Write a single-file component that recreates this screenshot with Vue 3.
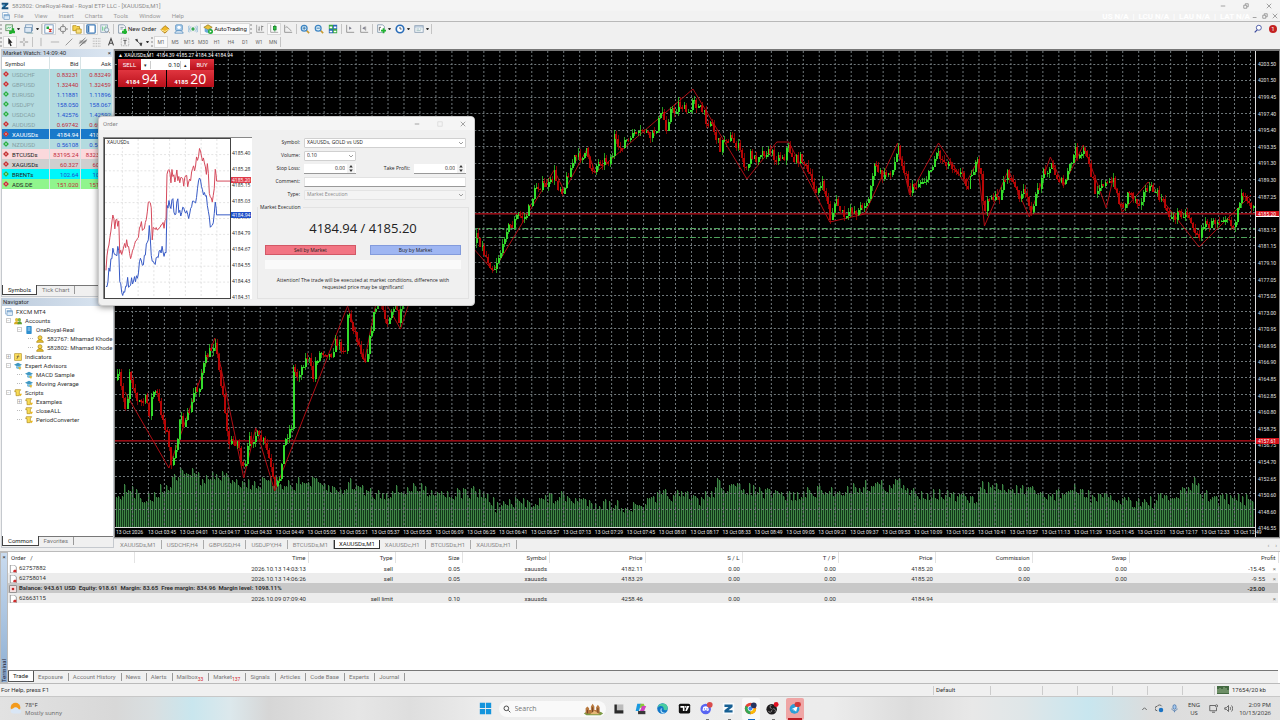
<script setup>
const icons = {
  logo: '<path d="M1 1h10v2.500L6 8h5v3H1V8.500L6 4H1z" fill="#17527f"/><path d="M2 5h4L3 8z" fill="#2b94cf"/>',
  doc: '<rect x="1" y="1" width="8" height="8" fill="#fff" stroke="#7ea6cc"/><rect x="3" y="4" width="8" height="7" fill="#dcebf8" stroke="#6d9ac4"/><path d="M3 5.500h8" stroke="#4f86bd"/>',
  newchart: '<rect x="1" y="1" width="8" height="7" fill="#e7f3e8" stroke="#5b8f5d"/><path d="M2 6l2-2 2 1 2-2" stroke="#4b7" fill="none"/><path d="M5 8h3V5h3v3h1v3h-4v1H5z" fill="#1fae2c"/>',
  profiles: '<rect x="2" y="1" width="8" height="7" fill="#f4f8fc" stroke="#6f93b5"/><rect x="1" y="4" width="8" height="6" fill="#dce8f4" stroke="#6f93b5"/><path d="M3 11h8" stroke="#8aa" />',
  market: '<rect x="1" y="1" width="10" height="10" fill="#fff" stroke="#6a8fb8"/><path d="M3 3h3v3H3z" fill="#22a63b"/><path d="M6 6l3 3M6 9l3-3" stroke="#d2342c" stroke-width="1.500"/>',
  cross: '<circle cx="6" cy="6" r="3.500" fill="none" stroke="#777"/><path d="M6 0v4M6 8v4M0 6h4M8 6h4" stroke="#777"/>',
  folder: '<path d="M1 2h4l1 1h3v5H1z" fill="#f6d351" stroke="#b99520"/><path d="M5 6h6v5H5z" fill="#f9e182" stroke="#b99520"/>',
  terminal: '<rect x="1" y="1" width="10" height="10" rx="1" fill="#fff" stroke="#3d78b5" stroke-width="1.500"/><path d="M2 2h2v8H2z" fill="#3d78b5"/>',
  tester: '<rect x="1" y="1" width="8" height="9" fill="#edf1f5" stroke="#91a5ba"/><path d="M3 3v5M5 4v4M7 2v4" stroke="#6c8"/><circle cx="8" cy="7" r="2.500" fill="#dff0fa" stroke="#8795a5"/><path d="M10 9l2 2" stroke="#987"/>',
  order: '<path d="M2 1h6l2 2v8H2z" fill="#fff" stroke="#71889f"/><path d="M4 4h4M4 6h3" stroke="#789"/><path d="M6 8h2V6h3v2h1v3h-1v1H8v-1H6z" fill="#21b331"/>',
  diamond: '<path d="M1 7l5-5 5 4-5 5z" fill="#f0b92a" stroke="#a8770d"/><path d="M1 7l5 2 5-3" stroke="#fff0b0" fill="none"/>',
  person: '<rect x="2" y="1" width="8" height="7" rx="1" fill="#a9cdec" stroke="#5b91c1"/><circle cx="6" cy="4" r="2" fill="#fff"/><path d="M1 11c0-4 10-4 10 0z" fill="#e4eef7" stroke="#5b91c1"/>',
  signal: '<circle cx="6" cy="6" r="2" fill="#36a852"/><path d="M3.500 3c-2 2-2 4 0 6M8.500 3c2 2 2 4 0 6M1.500 2c-2 3-2 5 0 8M10.500 2c2 3 2 5 0 8" stroke="#7baed2" fill="none"/>',
  auto: '<path d="M1 4l5-3 5 3-5 3z" fill="#e8c23d" stroke="#9d8323"/><path d="M2 5v4c2 2 6 2 8 0V5L6 7z" fill="#6aaad8"/><circle cx="9" cy="9" r="3" fill="#20ad36"/><path d="M8 7.500L10.500 9 8 10.500z" fill="#fff"/>',
  bars: '<path d="M2 1v9h9" stroke="#999" fill="none"/><path d="M5 3v5M4 7h1M8 2v6M8 3h2" stroke="#777"/>',
  candles: '<path d="M2 1v9h9" stroke="#999" fill="none"/><path d="M7 1v8" stroke="#18852a"/><rect x="5.500" y="3" width="3" height="4" fill="#2fc645" stroke="#18852a"/>',
  line: '<path d="M2 1v9h9M3 4c3-2 4 3 7 4" stroke="#888" fill="none"/>',
  zoomin: '<path d="M7.500 7.500L11 11" stroke="#c89a31" stroke-width="2"/><circle cx="5" cy="5" r="3.500" fill="#d9effb" stroke="#3d84c2" stroke-width="1.500"/><path d="M3 5h4M5 3v4" stroke="#2c6aa0"/>',
  zoomout: '<path d="M7.500 7.500L11 11" stroke="#c89a31" stroke-width="2"/><circle cx="5" cy="5" r="3.500" fill="#d9effb" stroke="#3d84c2" stroke-width="1.500"/><path d="M3 5h4" stroke="#2c6aa0"/>',
  tile: '<path d="M1 1h5v5H1zM6 6h5v5H6z" fill="#39a845"/><path d="M6 1h5v5H6zM1 6h5v5H1z" fill="#2b68b8"/><path d="M2 3h3v2H2zM7 3h3v2H7zM2 8h3v2H2zM7 8h3v2H7z" fill="#fff"/>',
  shift: '<path d="M2 1v9h9" stroke="#888" fill="none"/><path d="M5 3l3 2-3 2z" fill="#778"/>',
  scroll: '<path d="M2 1v9h9M8 3v5" stroke="#888" fill="none"/><path d="M7 3L4 5l3 2z" fill="#778"/>',
  indic: '<path d="M2 1h6l2 2v7H2z" fill="#fff" stroke="#7d94a8"/><path d="M4 8V4h2" stroke="#555" fill="none"/><path d="M6 7h2V5h2v2h2v2h-2v2H8V9H6z" fill="#21b331"/>',
  clock: '<circle cx="6" cy="6" r="4.500" fill="#fff" stroke="#2a6db8" stroke-width="2"/><path d="M6 3.500V6h2" stroke="#345" fill="none"/>',
  template: '<rect x="1" y="2" width="10" height="8" fill="#f4f7fa" stroke="#8a9fb4"/><path d="M1 3.500h10" stroke="#8aa6c2"/><path d="M3 6h3M3 8h5M7 6h2" stroke="#9bb"/>',
  cursor: '<path d="M4 1l5 6H6.500L8 10.500l-1.500.500L5 7.500 4 9z" fill="#222"/>',
  plus: '<path d="M6 1v4M6 7v4M1 6h4M7 6h4" stroke="#888"/>',
  vline: '<path d="M6 1v10" stroke="#aaa"/>',
  hline: '<path d="M1 6h10" stroke="#aaa"/>',
  trend: '<path d="M2 10L10 2" stroke="#888"/>',
  channel: '<path d="M1 8l8-7M3 10l8-7M2 11l8-7M2 5h8M2 7h7" stroke="#777"/>',
  fibo: '<path d="M1 2h10M1 5h10M1 8h10M1 11h10" stroke="#999" stroke-dasharray="1 1"/>',
  letter: '<path d="M3 10L6 2l3 8M4 7.500h4" stroke="#444" stroke-width="1.300" fill="none"/>',
  label: '<rect x="1.500" y="1.500" width="9" height="9" fill="none" stroke="#999" stroke-dasharray="1 1"/><path d="M4 4h4M6 4v5" stroke="#444"/>',
  arrows: '<path d="M1 3l3-1 1 3-1 1zM7 7l3 0-1 4-2-1z" fill="#444"/><path d="M3 4l5 5" stroke="#444"/>',
  accounts: '<circle cx="4" cy="4" r="2.500" fill="#e2bb33"/><path d="M0 11c0-6 8-6 8 0z" fill="#d5a91f"/><circle cx="8" cy="4" r="2.500" fill="#7cb342"/><path d="M5 11c0-6 7-6 7 0z" fill="#5f9c30"/>',
  server: '<rect x="2" y="0" width="8" height="12" rx="1" fill="#2f8fcf"/><path d="M4 3h4M4 6h4" stroke="#fff"/>',
  user: '<circle cx="6" cy="4" r="3" fill="#f3d043" stroke="#a07d12"/><path d="M1 11c0-5 10-5 10 0z" fill="#eac22f" stroke="#a07d12"/>',
  func: '<rect x="1" y="1" width="10" height="10" fill="#f9dc5a" stroke="#b8962b"/><path d="M7 3c-2 0-1 5-3 6M4 5.500h4" stroke="#654" fill="none"/>',
  expert: '<path d="M0 4l6-3 6 3-6 3z" fill="#3f97c2"/><path d="M3 6v3c2 2 5 2 7 0V5L6 7z" fill="#78bddf"/><path d="M6 8l5 0-2 4z" fill="#e6b92c"/>',
  script: '<path d="M2 1h8L8 4v6H3V4H1z" fill="#f8dc58" stroke="#ac8a20"/><path d="M7 7h5l-2 4z" fill="#e9b71d"/>',
  sheet: '<path d="M2 0h6l3 3v9H2z" fill="#fff" stroke="#777"/><path d="M6 9l2-2h3v4H7z" fill="#cf2c2c"/>',
  balance: '<rect x="1" y="1" width="10" height="10" fill="#f2dede" stroke="#777"/><circle cx="6" cy="6" r="2" fill="#c22727"/>',
}
const menus = ['File', 'View', 'Insert', 'Charts', 'Tools', 'Window', 'Help']
const tools = [
  { i: 'newchart', c: 1, t: 'New chart' }, { i: 'profiles', c: 1, t: 'Profiles' }, { s: 1 },
  { i: 'market', p: 1, t: 'Market Watch' }, { i: 'cross', t: 'Data Window' }, { i: 'folder', p: 1, t: 'Navigator' }, { i: 'terminal', p: 1, t: 'Terminal' }, { i: 'tester', t: 'Strategy Tester' }, { s: 3 },
  { i: 'order', text: 'New Order' }, { i: 'diamond', t: 'MetaEditor' }, { i: 'person', t: 'Virtual hosting' }, { i: 'signal', t: 'Signals' },
  { i: 'auto', text: 'AutoTrading', p: 1 }, { g: 1 }, { i: 'bars', t: 'Bar chart' }, { i: 'candles', p: 1, t: 'Candlesticks' }, { i: 'line', t: 'Line chart' }, { s: 3 },
  { i: 'zoomin', t: 'Zoom in' }, { i: 'zoomout', t: 'Zoom out' }, { i: 'tile', t: 'Tile windows' }, { s: 3 }, { i: 'shift', t: 'Auto scroll' }, { i: 'scroll', t: 'Chart shift' }, { s: 3 },
  { i: 'indic', c: 1, t: 'Indicators' }, { i: 'clock', c: 1, t: 'Periods' }, { i: 'template', c: 1, t: 'Templates' }, { s: 1 },
]
const drawTools = ['cursor', 'plus', '', 'vline', 'hline', 'trend', 'channel', 'fibo', 'letter', 'label']
const periods = ['M1', 'M5', 'M15', 'M30', 'H1', 'H4', 'D1', 'W1', 'MN']
const quotes = [
  ['USDCHF', '0.83231', '0.83249', 0, 'fx'], ['GBPUSD', '1.32440', '1.32459', 0, 'fx'], ['EURUSD', '1.11881', '1.11896', 1, 'fx'],
  ['USDJPY', '158.050', '158.067', 1, 'fx'], ['USDCAD', '1.42576', '1.42592', 1, 'fx'], ['AUDUSD', '0.69742', '0.69758', 0, 'fx'],
  ['XAUUSDs', '4184.94', '4185.20', 0, 'sel'], ['NZDUSD', '0.56108', '0.56127', 1, 'fx'], ['BTCUSDs', '83195.24', '83231.24', 0, 'btc'],
  ['XAGUSDs', '60.327', '60.352', 0, 'xag'], ['BRENTs', '102.64', '102.70', 1, 'brent'], ['ADS.DE', '151.020', '151.120', 0, 'ads'],
].map(([name, bid, ask, up, kind]) => ({ name, bid, ask, up, kind }))
const tree = [
  [0, 'doc', 'FXCM MT4', ''], [1, 'accounts', 'Accounts', '−'], [2, 'server', 'OneRoyal-Real', '−'], [3, 'user', '582767: Mhamad Khode', ''], [3, 'user', '582802: Mhamad Khode', ''],
  [1, 'func', 'Indicators', '+'], [1, 'expert', 'Expert Advisors', '−'], [2, 'expert', 'MACD Sample', ''], [2, 'expert', 'Moving Average', ''],
  [1, 'script', 'Scripts', '−'], [2, 'script', 'Examples', '+'], [2, 'script', 'closeALL', ''], [2, 'script', 'PeriodConverter', ''],
]
const chartTabs = ['XAUUSDs,M1', 'USDCHF,H4', 'GBPUSD,H4', 'USDJPY,H4', 'BTCUSDs,M1', 'XAUUSDs,M1', 'XAUUSDc,H1', 'BTCUSDs,H1', 'XAUUSDs,H1']
const prices = ['4203.50', '4201.50', '4199.45', '4197.40', '4195.40', '4193.35', '4191.30', '4189.30', '4187.25', '4185.20', '4183.15', '4181.15', '4179.10', '4177.05', '4175.05', '4173.00', '4170.95', '4168.95', '4166.90', '4164.85', '4162.85', '4160.80', '4158.75', '4156.75', '4154.70', '4152.65', '4150.60', '4148.60', '4146.55']
const times = ['13 Oct 2026']
for (let k = 0; k < 35; k++) {
  const m = 225 + k * 16
  times.push('13 Oct ' + String(Math.floor(m / 60)).padStart(2, '0') + ':' + String(m % 60).padStart(2, '0'))
}
const orders = [
  ['62757882', '2026.10.13 14:03:13', 'sell', '0.05', 'xauusds', '4182.11', '0.00', '0.00', '4185.20', '0.00', '0.00', '-15.45'],
  ['62758014', '2026.10.13 14:06:26', 'sell', '0.05', 'xauusds', '4183.29', '0.00', '0.00', '4185.20', '0.00', '0.00', '-9.55'],
]
const pending = ['62663115', '2026.10.09 07:09:40', 'sell limit', '0.10', 'xauusds', '4258.46', '0.00', '0.00', '4184.94', '', '', '']
const heads = ['Time', 'Type', 'Size', 'Symbol', 'Price', 'S / L', 'T / P', 'Price', 'Commission', 'Swap']
const termTabs = [['Trade'], ['Exposure'], ['Account History'], ['News'], ['Alerts'], ['Mailbox', '33'], ['Market', '137'], ['Signals'], ['Articles'], ['Code Base'], ['Experts'], ['Journal']]
const tickLabels = ['4185.40', '4185.28', '4185.15', '4185.03', '4184.91', '4184.79', '4184.67', '4184.55', '4184.43', '4184.31']

let seed = 7
const rnd = () => { seed = (seed * 16807) % 2147483647; return seed / 2147483647 }
const at = (pts, x) => {
  for (let k = 1; k < pts.length; k++) {
    if (x <= pts[k][0]) {
      const [x0, y0] = pts[k - 1], [x1, y1] = pts[k]
      return x1 === x0 ? y1 : y0 + ((y1 - y0) * (x - x0)) / (x1 - x0)
    }
  }
  return pts[pts.length - 1][1]
}
const pairs = (s) => s.trim().split(/\s+/).map((p) => p.split(',').map(Number))
const course = pairs(`116,380 119,375 122,394 126,410 129,370 134,388 137,402 142,402 146,398 149,412 152,391 157,395 163,420 168,436 170,462 174,462 178,430 180,408 184,428 188,412 192,402 194,386 198,392 201,372 206,356 212,348 215,339 218,365 224,400 228,444 232,441 238,442 241,460 244,475 248,440 252,440 256,433 260,440 264,442 268,454 272,475 275,489 279,478 282,450 286,436 291,426 292,366 297,376 301,368 304,360 308,356 313,378 315,362 320,352 326,352 330,356 335,342 339,345 345,350 347,314 350,318 354,330 360,348 365,360 369,340 373,315 377,302 382,306 386,322 391,310 396,306 400,327 402,300 420,270 450,240 475,240 476,229 480,240 486,255 494,270 498,258 503,248 506,228 513,225 518,215 526,218 532,200 537,186 544,185 550,185 555,173 559,186 564,190 568,175 575,158 582,156 587,152 590,165 594,170 600,161 610,160 613,154 615,136 619,151 626,140 631,142 633,130 638,137 644,128 650,138 656,130 660,118 663,112 667,127 671,110 676,112 679,103 684,108 690,116 694,92 697,105 704,112 708,122 712,120 716,135 721,148 725,138 731,138 738,145 744,160 748,176 750,152 756,160 760,152 766,152 772,152 776,158 782,155 785,157 788,145 795,160 803,158 811,178 816,190 824,185 828,200 831,218 836,200 842,212 848,220 851,208 858,213 862,205 869,200 873,173 876,165 883,177 893,170 899,147 905,170 911,190 920,182 928,178 938,150 943,160 953,165 963,175 969,185 974,170 979,163 984,180 986,216 991,195 1000,200 1006,178 1010,173 1020,195 1026,192 1032,210 1040,190 1044,172 1053,166 1060,178 1065,185 1072,165 1077,150 1082,160 1086,147 1092,170 1097,190 1104,182 1110,185 1116,180 1122,207 1126,205 1130,190 1140,203 1148,188 1156,190 1165,203 1174,220 1180,212 1190,214 1197,232 1202,243 1203,224 1212,225 1225,216 1230,216 1236,229 1238,212 1242,195 1250,206 1255,204`)
const candles = []
let last = 380
for (let x = 117; x < 1256; x += 2) {
  const close = at(course, x) + (rnd() - 0.5) * 9
  const top = Math.min(last, close), bottom = Math.max(last, close)
  candles.push({ x, y: top, h: Math.max(1.5, bottom - top), up: close < last, wt: top - rnd() * 5, wb: bottom + rnd() * 5 })
  last = close
}
const zigzag = '125,392 169,468 215,338 244,478 256,428 275,491 348,306 365,361 379,290 401,329 440,210 494,271 555,170 565,191 588,149 596,173 694,89 748,179 778,142 790,142 831,222 866,214 899,143 911,195 940,143 967,184 979,161 986,226 1010,170 1031,217 1052,157 1065,186 1085,145 1108,208 1115,178 1124,212 1150,182 1201,247 1253,195'
const volEnv = pairs('116,492 125,488 150,496 163,486 172,480 178,470 192,470 204,480 212,474 232,476 245,482 275,480 290,482 312,480 340,490 348,481 375,492 420,486 450,492 480,490 490,497 496,504 530,500 560,495 590,500 640,506 665,492 700,497 714,490 720,477 726,487 748,486 765,492 800,494 815,489 835,490 875,482 895,485 898,476 905,490 940,492 975,499 985,484 1020,488 1050,494 1075,488 1100,496 1150,500 1180,494 1197,480 1206,494 1230,498 1256,495')
const volumes = []
for (let x = 116; x < 1256; x += 2) volumes.push({ x, y: Math.min(514, at(volEnv, x) + (rnd() - 0.35) * 13) })
const vgrid = Array.from({ length: 71 }, (_, k) => 132 + k * 16)
const hgrid = Array.from({ length: 28 }, (_, k) => 64 + k * 16.5)

const ask = pairs('20,465 30,390 42,312 46,350 50,314 55,345 60,316 62,430 75,410 85,390 95,435 105,395 118,380 127,315 133,370 140,320 148,290 152,270 158,300 160,375 170,342 180,350 190,322 198,355 203,320 206,180 212,175 218,212 222,172 230,205 235,180 243,212 250,180 257,210 262,178 270,215 280,200 285,165 290,180 295,142 300,150 307,97 312,140 318,130 325,175 330,165 335,240 345,266 350,220 353,167 357,208')
const bid = pairs('20,530 30,480 42,408 50,435 58,402 62,510 72,545 85,510 95,520 105,500 115,505 127,432 133,465 140,420 152,357 160,455 170,450 180,435 190,417 198,440 203,425 206,285 212,265 218,300 222,252 230,318 238,270 247,318 255,280 262,310 275,308 285,262 290,285 298,252 307,182 312,225 318,245 325,250 333,310 340,348 347,330 352,267 357,310')
const rough = (pts) => {
  let s = ''
  for (let x = 20; x <= 357; x += 3) s += `${x},${(at(pts, x) + (rnd() - 0.5) * 30).toFixed(1)} `
  return s
}
const askLine = rough(ask) + '357,208 398,208'
const bidLine = rough(bid) + '357,310 398,310'
</script>

<template>
  <div class="desktop">
    <header class="titlebar">
      <svg class="ico" viewBox="0 0 12 12" v-html="icons.logo"></svg>
      <h1>582802: OneRoyal-Real - Royal ETP LLC - [XAUUSDs,M1]</h1>
      <div class="winbtns">
        <button aria-label="Minimize"><svg viewBox="0 0 8 8"><path d="M1 4h6" /></svg></button>
        <button aria-label="Restore"><svg viewBox="0 0 8 8"><path d="M1 3h4v4H1zM3 3V1h4v4H5" /></svg></button>
        <button aria-label="Close"><svg viewBox="0 0 8 8"><path d="M1 1l6 6M7 1L1 7" /></svg></button>
      </div>
    </header>
    <nav class="menubar">
      <svg class="ico" viewBox="0 0 12 12" v-html="icons.doc"></svg>
      <button v-for="m in menus" :key="m">{{ m }}</button>
      <span class="ghost">US N/A&nbsp; |&nbsp; LCU N/A&nbsp; |&nbsp; LAU N/A&nbsp; |&nbsp; LAT N/A</span>
      <div class="docbtns">
        <button aria-label="Minimize chart"><svg viewBox="0 0 8 8"><path d="M1 6h5" /></svg></button>
        <button aria-label="Restore chart"><svg viewBox="0 0 8 8"><path d="M1 3h4v4H1zM3 3V1h4v4H5" /></svg></button>
        <button aria-label="Close chart"><svg viewBox="0 0 8 8"><path d="M1 1l6 6M7 1L1 7" /></svg></button>
      </div>
    </nav>
    <div class="toolbar main">
      <i class="grip"></i>
      <template v-for="(t, k) in tools" :key="k">
        <i v-if="t.s" class="sep" :class="{ wide: t.s > 1 }"></i>
        <i v-else-if="t.g" class="grip"></i>
        <button v-else class="tool" :class="{ pressed: t.p, drop: t.c, labelled: t.text }" :aria-label="t.text || t.t">
          <svg class="ico" viewBox="0 0 12 12" v-html="icons[t.i]"></svg><span v-if="t.text">{{ t.text }}</span><i v-if="t.c" class="caret"></i>
        </button>
      </template>
      <div class="right">
        <button class="tool" aria-label="Search"><svg class="ico" viewBox="0 0 12 12"><circle cx="7" cy="4.500" r="3" fill="#fff" stroke="#39489c" /><path d="M5 7L2 10" stroke="#39489c" stroke-width="1.500" /></svg></button>
        <button class="notice" aria-label="Notifications">1</button>
      </div>
    </div>
    <div class="toolbar second">
      <i class="grip"></i>
      <template v-for="(d, k) in drawTools" :key="k">
        <i v-if="!d" class="sep wide"></i>
        <button v-else class="tool" :class="{ pressed: d === 'cursor' }" :aria-label="d"><svg class="ico" viewBox="0 0 12 12" v-html="icons[d]"></svg></button>
      </template>
      <button class="tool drop" aria-label="Arrows"><svg class="ico" viewBox="0 0 12 12" v-html="icons.arrows"></svg><i class="caret"></i></button>
      <i class="grip"></i>
      <button v-for="p in periods" :key="p" class="tool period" :class="{ pressed: p === 'M1' }">{{ p }}</button>
      <i class="sep"></i>
    </div>

    <main class="work">
      <aside class="side">
        <section class="panel watch">
          <h2>Market Watch: 14:09:40 <button aria-label="Close Market Watch">×</button></h2>
          <table class="quotes">
            <thead><tr><th>Symbol</th><th>Bid</th><th>Ask</th></tr></thead>
            <tbody>
              <tr v-for="q in quotes" :key="q.name" :class="[q.kind, { up: q.up }]">
                <td><i class="mark"></i>{{ q.name }}</td><td>{{ q.bid }}</td><td>{{ q.ask }}</td>
              </tr>
            </tbody>
          </table>
          <div class="tabs"><button class="on">Symbols</button><button>Tick Chart</button></div>
        </section>
        <section class="panel">
          <h2>Navigator</h2>
          <ul class="tree">
            <li v-for="(n, k) in tree" :key="k" :class="'l' + n[0]">
              <i class="box">{{ n[3] }}</i><svg class="ico" viewBox="0 0 12 12" v-html="icons[n[1]]"></svg><span>{{ n[2] }}</span>
            </li>
          </ul>
          <div class="tabs"><button class="on">Common</button><button>Favorites</button></div>
        </section>
      </aside>

      <section class="chartarea">
        <div class="chart">
          <div class="plotcol">
            <svg class="plot" viewBox="115 51 1142 476" preserveAspectRatio="none" shape-rendering="crispEdges">
              <rect v-for="v in volumes" :key="v.x" :x="v.x" :y="v.y" width="1" :height="527 - v.y" fill="#3f8545" />
              <rect v-for="v in volumes" :key="'s' + v.x" :x="v.x + 1" :y="v.y + 1" width="1" :height="526 - v.y" fill="#12361a" />
              <g stroke="#6f777a" stroke-dasharray="2 2">
                <path v-for="x in vgrid" :key="x" :d="`M${x}.5 51V527`" />
                <path v-for="y in hgrid" :key="y" :d="`M115 ${Math.floor(y)}.5H1257`" />
              </g>
              <path d="M115 213.500H1257M115 440.500H1257" stroke="#980b14" />
              <path d="M115 214.500H1257M115 441.500H1257" stroke="#5d0b10" />
              <path d="M115 228.500H1257M115 237.500H1257" stroke="#4fa35c" stroke-dasharray="6 2 2 2" />
              <polyline :points="zigzag" fill="none" stroke="#b00d14" shape-rendering="auto" />
              <g v-for="c in candles" :key="c.x" :fill="c.up ? '#34dc2c' : '#b80606'">
                <rect :x="c.x" :y="c.wt" width="1" :height="c.wb - c.wt" opacity=".7" />
                <rect :x="c.x - (c.up ? 0 : 1)" :y="c.y" width="2" :height="c.h" />
              </g>
            </svg>
            <div class="times"><span v-for="t in times" :key="t">{{ t }}</span></div>
          </div>
          <div class="axis">
            <span v-for="p in prices" :key="p">{{ p }}</span>
            <b class="tag one">4185.20</b><b class="tag two">4157.61</b>
          </div>
          <div class="oneclick">
            <p>▲ XAUUSDs,M1&nbsp; 4184.39 4185.27 4184.34 4184.94</p>
            <div class="ocgrid">
              <button class="red">SELL</button>
              <span class="vol"><button aria-label="Decrease">▾</button><input aria-label="Volume" value="0.10"><button aria-label="Increase">▴</button></span>
              <button class="red">BUY</button>
            </div>
            <div class="ocprices"><span>4184 <b>94</b></span><span>4185 <b>20</b></span></div>
          </div>
        </div>
        <div class="charttabs">
          <button v-for="(t, k) in chartTabs" :key="k" :class="{ on: k === 5 }">{{ t }}</button>
          <span class="scroller"><button aria-label="Scroll left">‹</button><button aria-label="Scroll right">›</button></span>
        </div>
      </section>

      <section class="dialog" role="dialog" aria-label="Order">
        <div class="dtitle">
          <h2>Order</h2>
          <div class="winbtns">
            <button aria-label="Minimize order"><svg viewBox="0 0 8 8"><path d="M1 4h6" /></svg></button>
            <button class="dim" aria-label="Maximize order"><svg viewBox="0 0 8 8"><path d="M1 1h6v6H1z" /></svg></button>
            <button aria-label="Close order"><svg viewBox="0 0 8 8"><path d="M1 1l6 6M7 1L1 7" /></svg></button>
          </div>
        </div>
        <div class="dbody">
          <div class="ticks">
            <div class="tickplot">
              <span>XAUUSDs</span>
              <svg viewBox="17 81 381 480" preserveAspectRatio="none">
                <path d="M70 81V561M118 81V561M166 81V561M214 81V561M262 81V561M310 81V561M358 81V561M17 128H398M17 177H398M17 225H398M17 273H398M17 321H398M17 369H398M17 416H398M17 465H398M17 513H398" stroke="#d6d6d6" stroke-width="2" stroke-dasharray="6 6" />
                <polyline :points="bidLine" fill="none" stroke="#3558c4" stroke-width="3" />
                <polyline :points="askLine" fill="none" stroke="#d5485a" stroke-width="3" />
              </svg>
            </div>
            <div class="ticklabels">
              <span v-for="t in tickLabels" :key="t">{{ t }}</span>
              <b class="tred">4185.20</b><b class="tblue">4184.94</b>
            </div>
          </div>
          <form class="form" @submit.prevent>
            <div class="frow"><label for="sym">Symbol:</label><select id="sym" class="grow"><option>XAUUSDs, GOLD vs USD</option></select></div>
            <div class="frow"><label for="vol">Volume:</label><select id="vol" class="short"><option>0.10</option></select></div>
            <div class="frow">
              <label for="sl">Stop Loss:</label><span class="spin"><input id="sl" value="0.00"><svg viewBox="0 0 8 10"><path d="M2 4l2-3 2 3zM2 6l2 3 2-3z" fill="#333" /></svg></span>
              <label for="tp" class="far">Take Profit:</label><span class="spin"><input id="tp" value="0.00"><svg viewBox="0 0 8 10"><path d="M2 4l2-3 2 3zM2 6l2 3 2-3z" fill="#333" /></svg></span>
            </div>
            <div class="frow"><label for="com">Comment:</label><input id="com" class="grow"></div>
            <div class="frow"><label for="typ">Type:</label><select id="typ" class="grow off" disabled><option>Market Execution</option></select></div>
            <fieldset>
              <legend>Market Execution</legend>
              <output>4184.94 / 4185.20</output>
              <div class="deal"><button class="sell">Sell by Market</button><button class="buy">Buy by Market</button></div>
              <div class="blank"></div>
              <p>Attention! The trade will be executed at market conditions, difference with requested price may be significant!</p>
            </fieldset>
          </form>
        </div>
      </section>
    </main>

    <section class="terminal">
      <div class="strip"><button aria-label="Close Terminal">×</button><span>Terminal</span></div>
      <div class="termbody">
        <table class="orders">
          <colgroup><col class="c126"><col class="c175"><col class="c87"><col class="c67"><col class="c87"><col class="c96"><col class="c97"><col class="c96"><col class="c97"><col class="c97"><col class="c97"><col class="c138"><col class="c10"></colgroup>
          <thead><tr><th>Order&nbsp;&nbsp; /</th><th v-for="(h, k) in heads" :key="k">{{ h }}</th><th colspan="2">Profit</th></tr></thead>
          <tbody>
            <tr v-for="(o, r) in orders" :key="o[0]" :class="{ alt: r }">
              <td v-for="(c, k) in o" :key="k"><svg v-if="!k" class="ico" viewBox="0 0 12 12" v-html="icons.sheet"></svg>{{ c }}</td>
              <td><button :aria-label="'Close ' + o[0]">×</button></td>
            </tr>
            <tr class="balance">
              <td colspan="11"><svg class="ico" viewBox="0 0 12 12" v-html="icons.balance"></svg>Balance: 943.61 USD&nbsp; Equity: 918.61&nbsp; Margin: 83.65&nbsp; Free margin: 834.96&nbsp; Margin level: 1098.11%</td>
              <td>-25.00</td><td></td>
            </tr>
            <tr class="alt">
              <td v-for="(c, k) in pending" :key="k"><svg v-if="!k" class="ico" viewBox="0 0 12 12" v-html="icons.sheet"></svg>{{ c }}</td>
              <td><button aria-label="Delete 62663115">×</button></td>
            </tr>
          </tbody>
        </table>
        <div class="termtabs"><button v-for="(t, k) in termTabs" :key="t[0]" :class="{ on: !k }">{{ t[0] }}<sub v-if="t[1]">{{ t[1] }}</sub></button></div>
      </div>
    </section>
    <footer class="status">
      <span class="help">For Help, press F1</span><span class="prof">Default</span><span class="s1"></span><span class="s2"></span><span class="s2"></span><span class="s2"></span><span class="s2"></span><span class="s3"></span>
      <span class="net"><svg viewBox="0 0 12 8"><path d="M0 0h12v8H0z" fill="#446a42" /><path d="M1 7V3M3 7V2M5 7V3M7 7V1M9 7V2M11 7V4" stroke="#98b48b" /></svg>17654/20 kb</span>
    </footer>

    <div class="taskbar">
      <button class="weather">
        <svg viewBox="0 0 16 16"><circle cx="8" cy="7" r="6" fill="#f39a1c" /><path d="M5 14a3 3 0 010-6 4 4 0 017 1 2.500 2.500 0 011 5z" fill="#d9e6f5" /></svg>
        <span>78°F<small>Mostly sunny</small></span>
      </button>
      <div class="apps">
        <button aria-label="Start"><svg viewBox="0 0 16 16"><path d="M1 1h6.500v6.500H1zM8.500 1H15v6.500H8.500zM1 8.500h6.500V15H1zM8.500 8.500H15V15H8.500z" fill="#1494dc" /></svg></button>
        <label class="search">
          <svg viewBox="0 0 12 12"><circle cx="5" cy="5" r="3.500" fill="none" stroke="#333" stroke-width="1.300" /><path d="M8 8l3 3" stroke="#333" stroke-width="1.300" /></svg>
          <input aria-label="Search" placeholder="Search">
          <svg class="castle" viewBox="0 0 24 16"><path d="M1 13c4-4 18-4 22 0l-3 2H4z" fill="#7d9a45" /><path d="M3 13V7l2-2 2 2v2h2V5l2-3 2 3v4h2V6l2-3 2 3v7z" fill="#b8793f" /><path d="M5 13V9M11 13V6M17 13V7" stroke="#693c22" /><path d="M8 14l5-4 6 4z" fill="#e6b878" /></svg>
        </label>
        <button aria-label="Task view"><svg viewBox="0 0 16 16"><path d="M6 3h8v7H6z" fill="#bbb" /><path d="M3 3h3v7h8v4H3z" fill="#292929" /></svg></button>
        <button aria-label="Copilot"><svg viewBox="0 0 16 16"><path d="M4 2h5L6 11H2z" fill="#1b9ae0" /><path d="M8 2h4l2 5H7z" fill="#8cc63e" /><path d="M10 5h5l-3 7H7z" fill="#d143c0" /><path d="M5 11h9v4H5z" fill="#383838" /></svg></button>
        <button aria-label="Edge"><svg viewBox="0 0 16 16"><circle cx="8" cy="8" r="6.500" fill="#1277c8" /><path d="M2 7C3 0 14 0 14.500 7c0 4-6 4-5 1C9 4 4 4 2 7z" fill="#49cda0" /><path d="M8 8c-3 2 0 6 4 5-4 3-8-1-6-5z" fill="#bfe7fb" /></svg></button>
        <button aria-label="TradingView"><svg viewBox="0 0 16 16"><rect x="1" y="2" width="14" height="12" rx="2" fill="#111" /><path d="M3 5h5v6H6V7H3zM11 5h3l-3 6H9z" fill="#fff" /><circle cx="9.500" cy="6" r="1" fill="#fff" /></svg></button>
        <button class="run" aria-label="Discord"><svg viewBox="0 0 16 16"><circle cx="7" cy="8.500" r="6.500" fill="#5865f2" /><path d="M4 6c2-1 4-1 6 0l1 4-2 1-1-1H6l-1 1-2-1z" fill="#fff" /><circle cx="5.500" cy="8.500" r=".8" fill="#5865f2" /><circle cx="8.500" cy="8.500" r=".8" fill="#5865f2" /><circle cx="12" cy="3.500" r="3.500" fill="#d94b4b" /></svg></button>
        <button class="run" aria-label="OneRoyal"><svg viewBox="0 0 16 16"><rect x="1" y="1" width="14" height="14" fill="#f7fafc" /><path d="M3 3h10v3L8 10h5v3H3v-3l5-4H3z" fill="#165f93" /></svg></button>
        <button class="run active" aria-label="Chrome"><svg viewBox="0 0 16 16"><circle cx="8" cy="8" r="7" fill="#e94335" /><path d="M8 8L2 4.500A7 7 0 008 15z" fill="#34a853" /><path d="M8 8h7a7 7 0 01-7 7z" fill="#fbbc05" /><circle cx="8" cy="8" r="3" fill="#4285f4" stroke="#fff" /><circle cx="12" cy="4" r="3.500" fill="#26345f" /></svg></button>
        <button class="run" aria-label="OBS Studio"><svg viewBox="0 0 16 16"><circle cx="7" cy="9" r="6.500" fill="#1d1b1d" /><path d="M7 4a2 2 0 000 4M3 11a2 2 0 004-1M11 12a2 2 0 00-3-3" stroke="#999" fill="none" /><circle cx="12.500" cy="3" r="3" fill="#e01021" /></svg></button>
        <button class="run alert" aria-label="Telegram"><svg viewBox="0 0 16 16"><circle cx="8" cy="8.500" r="6" fill="#2a9fd8" /><path d="M4 9l8-4-2 7-2-2-1 1V9z" fill="#fff" /><rect x="8" y="0" width="8" height="6" rx="3" fill="#d33939" /></svg></button>
      </div>
      <div class="tray">
        <svg viewBox="0 0 12 12"><path d="M3 8l3-3 3 3" /></svg>
        <svg viewBox="0 0 12 12"><path d="M3 9a3 3 0 010-6 3.500 3.500 0 016 0" /><circle cx="8" cy="8" r="3" fill="#1b73c4" stroke="none" /></svg>
        <svg viewBox="0 0 12 12"><rect x="4" y="1" width="4" height="6" rx="2" fill="#a8c8ec" stroke="#3c6ea8" /><path d="M2.500 6c0 4 7 4 7 0M6 9v2" stroke="#3c6ea8" /></svg>
        <span class="lang">ENG<br>US</span>
        <svg viewBox="0 0 12 12"><path d="M8 2H1v7h9V5M4 11h4" /><circle cx="10" cy="2.500" r="1.500" /></svg>
        <svg viewBox="0 0 12 12"><path d="M1 5h2l3-3v8L3 7H1zM8 4c1 1 1 3 0 4M10 2c2 2 2 6 0 8" /></svg>
        <span class="clock">2:09 PM<br>10/13/2026</span>
      </div>
    </div>
  </div>
</template>

<style>
html, body { margin: 0; background: #f0f0f0; }
</style>

<style scoped>
* { box-sizing: border-box; }
.desktop { display: flex; flex-direction: column; min-height: 100vh; background: #f0f0f0; font: 6px/8px Roboto, "Open Sans", sans-serif; color: #333; overflow: hidden; }
h1, h2, p, ul { margin: 0; padding: 0; font-size: inherit; font-weight: 400; }
button, input, select { font: inherit; color: inherit; border: 0; background: none; padding: 0; margin: 0; border-radius: 0; min-width: 0; }
.ico { width: 8px; height: 8px; flex: none; }
.titlebar { display: flex; align-items: center; height: 11px; padding: 1px 0 0 1px; background: #f4f4f4; color: #8c8c8c; }
.titlebar h1 { margin-left: 3px; }
.winbtns { display: flex; margin-left: auto; }
.winbtns button { width: 23px; height: 8px; display: flex; justify-content: center; align-items: center; }
.winbtns svg, .docbtns svg { width: 6px; height: 6px; fill: none; stroke: #888; }
.menubar { display: flex; align-items: center; height: 11px; padding-left: 2px; background: #f2f2f2; border-bottom: 1px solid #b8b8b8; color: #999; }
.menubar > button { padding: 0 4px; }
.menubar > button + button { margin-left: 3px; }
.ghost { margin-left: auto; padding-right: 2px; font-size: 8px; line-height: 9px; font-weight: 700; color: #fff; }
.docbtns { display: flex; gap: 4px; padding-right: 2px; }
.docbtns button { display: flex; }
.toolbar { display: flex; align-items: center; height: 14px; background: #f0f0f0; }
.toolbar.second { height: 13px; padding-bottom: 1px; }
.grip { width: 3px; height: 10px; flex: none; border-left: 2px dotted #bbb; }
.sep { width: 1px; height: 10px; flex: none; background: #c4c4c4; }
.sep.wide { margin: 0 1px; }
.tool { width: 14px; height: 12px; flex: none; display: flex; align-items: center; justify-content: center; }
.tool .ico { width: 10px; height: 10px; }
.tool.drop { width: 19px; gap: 2px; }
.tool.labelled { width: auto; padding: 0 2px; gap: 1px; color: #222; }
.tool.pressed { background: #fafafa; border: 1px solid #d8d8d8; }
.tool.period { font-size: 5px; color: #666; }
.caret { border: 1px solid transparent; border-top: 2px solid #333; border-bottom: 0; width: 3px; }
.right { display: flex; align-items: center; margin-left: auto; gap: 4px; padding-right: 3px; }
.notice { width: 8px; height: 8px; border-radius: 4px; background: #c32121; color: #fff; line-height: 8px; text-align: center; }

.work { position: relative; display: flex; flex: 0 0 501px; }
.side { width: 114px; flex: none; display: flex; flex-direction: column; gap: 1px; padding: 0 0 2px 1px; }
.panel { flex: 1; display: flex; flex-direction: column; background: #fff; border: 1px solid #c5c9ce; border-top: 0; min-height: 0; overflow: hidden; }
.panel.watch { flex: 0 0 248px; }
.panel h2 { display: flex; justify-content: space-between; height: 8px; padding: 0 2px 0 1px; background: linear-gradient(90deg, #bccbdc, #dbe6f2); color: #333; flex: none; }
.quotes { width: 100%; border-collapse: collapse; table-layout: fixed; }
.quotes tr { height: 10px; }
.quotes thead tr { height: 12px; }
.quotes td, .quotes th { padding: 0 1px 0 0; text-align: right; font-weight: 400; white-space: nowrap; border-right: 1px solid #d8e4e6; line-height: 9px; }
.quotes th:first-child { width: 47px; padding-left: 3px; }
.quotes th:nth-child(2) { width: 31px; }
.quotes th:first-child, .quotes td:first-child { text-align: left; }
.quotes td { color: #c22c3c; }
.quotes .up td { color: #1f4fd0; }
.quotes td:first-child, .quotes .up td:first-child { color: #222; }
.mark { display: inline-block; width: 4px; height: 4px; margin: 0 4px 1px 2px; vertical-align: middle; transform: rotate(45deg); background: #e28b8b; border: 1px solid #c0282c; }
.up .mark { background: #8edc9c; border-color: #1da53a; }
.fx { background: #b3dbdf; }
.quotes .fx td:first-child { color: #86a1a5; }
.sel { background: #1979ca; }
.quotes .sel td, .quotes .sel td:first-child { color: #fff; }
.btc { background: #fbd9dc; }
.xag { background: #cfcfcf; }
.brent { background: #00f7fb; }
.ads { background: #90f58d; }
.tabs { margin-top: auto; display: flex; height: 11px; flex: none; border-top: 1px solid #777; background: #f0f0f0; color: #777; }
.tabs button { padding: 0 5px; height: 8px; border-right: 1px solid #999; }
.tabs .on { height: 10px; margin-top: -1px; background: #fff; border: 1px solid #444; border-top: 0; color: #222; }
.tree { list-style: none; padding-top: 1px; }
.tree li { display: flex; align-items: center; height: 9px; gap: 3px; white-space: nowrap; }
.tree .l1 { padding-left: 4px; }
.tree .l2 { padding-left: 15px; }
.tree .l3 { padding-left: 26px; }
.box { width: 5px; height: 5px; flex: none; font: normal 5px/3px Roboto, sans-serif; text-align: center; color: #999; border: 1px solid #ccc; }
.box:empty { border: 0; border-top: 1px dotted #bbb; height: 1px; }
.tree .l0 .box { display: none; }
.tree .l0 { padding-left: 3px; }

.chartarea { flex: 1; min-width: 0; display: flex; flex-direction: column; }
.chart { position: relative; flex: 1; display: flex; background: #000; border: 1px solid #8b8b8b; border-top: 2px solid #777; min-height: 0; }
.plotcol { flex: 1; min-width: 0; display: flex; flex-direction: column; border-right: 1px solid #ddd; }
.plot { flex: 1; min-height: 0; width: 100%; display: block; border-bottom: 1px solid #ddd; }
.times { display: flex; height: 9px; flex: none; color: #e8e8e8; font-size: 5px; line-height: 8px; padding: 0 0 0 1px; }
.times span { flex: 32 1 0; min-width: 0; white-space: nowrap; }
.times span:last-child { flex-grow: 22; }
.axis { position: relative; width: 23px; flex: none; display: flex; flex-direction: column; padding-top: 5px; color: #e4e4e4; font-size: 5px; line-height: 5px; }
.axis span { flex: 1; display: flex; align-items: center; padding-left: 2px; }
.tag { position: absolute; left: 0; right: 0; height: 6px; line-height: 6px; padding-left: 2px; background: #d2101a; color: #fff; font-weight: 400; }
.tag.one { top: 160px; border-bottom: 1px solid #fff; }
.tag.two { top: 387px; }
.oneclick { position: absolute; left: 3px; top: 0; color: #fff; font-size: 5px; }
.oneclick p { height: 8px; }
.ocgrid { display: grid; grid-template-columns: 23px 49px 24px; width: 96px; height: 11px; }
.red, .ocprices span { background: linear-gradient(#e0353f, #b9101b); }
.red { color: #fff; font-size: 6px; }
.vol { display: flex; background: #fff; color: #222; align-items: center; }
.vol button { width: 9px; }
.vol input { width: 31px; text-align: right; font-size: 6px; border-left: 1px solid #ccc; border-right: 1px solid #ccc; }
.ocprices { display: grid; grid-template-columns: 1fr 1fr; gap: 1px; width: 96px; height: 17px; font-size: 6px; font-weight: 700; }
.ocprices span { display: flex; align-items: end; justify-content: center; gap: 2px; line-height: 8px; padding-bottom: 1px; }
.ocprices b { font: 400 14px/14px "Open Sans", sans-serif; }
.charttabs { display: flex; align-items: center; height: 12px; background: #f0f0f0; border-top: 1px solid #ccc; padding-left: 1px; color: #888; }
.charttabs button { height: 9px; padding: 0 5px; border-right: 1px solid #aaa; }
.charttabs .on { background: #fff; color: #222; border: 1px solid #333; border-top: 0; padding: 0 4px; }
.charttabs .scroller { margin-left: auto; }
.charttabs .scroller button { border: 0; padding: 0 3px; }

.dialog { position: absolute; left: 98px; top: 67px; width: 377px; height: 190px; background: #f0f0f0; border: 1px solid #ccc; border-radius: 4px; box-shadow: 0 1px 6px rgba(0, 0, 0, .5); display: flex; flex-direction: column; overflow: hidden; }
.dtitle { display: flex; align-items: center; height: 13px; flex: none; padding-left: 4px; background: #f5f5f5; color: #888; }
.dbody { flex: 1; min-height: 0; display: flex; padding: 7px 5px 6px 4px; font: 5px/7px "Open Sans", sans-serif; color: #222; }
.dim { opacity: .25; }
.ticks { width: 149px; flex: none; display: flex; background: #fff; border-top: 1px solid #888; border-left: 1px solid #888; }
.tickplot { position: relative; width: 127px; border: 1px solid #444; display: flex; flex-direction: column; }
.tickplot span { position: absolute; left: 2px; top: 0; }
.tickplot svg { width: 100%; flex: 1 1 0; min-height: 0; display: block; }
.ticklabels { position: relative; flex: 1; padding: 12px 0 0 1px; display: flex; flex-direction: column; }
.ticklabels span { height: 16px; }
.ticklabels span:last-of-type { height: 4px; }
.ticklabels b { position: absolute; left: 0; width: 20px; height: 6px; line-height: 6px; padding-left: 1px; color: #fff; font-weight: 400; }
.tred { top: 39px; background: #e03b4a; }
.tblue { top: 74px; background: #1e4fc9; }
.form { flex: 1; margin-left: 5px; display: flex; flex-direction: column; gap: 2px; }
.frow { display: flex; align-items: center; height: 11px; flex: none; padding-right: 3px; gap: 4px; }
.frow label { width: 43px; flex: none; text-align: right; }
.frow .far { width: 48px; margin-left: auto; }
.frow select, .frow input { height: 10px; background: #fff; border: 1px solid #e2e2e2; border-bottom-color: #999; appearance: none; padding: 0 2px; }
.frow select { background: #fff url("data:image/svg+xml,%3Csvg xmlns='http://www.w3.org/2000/svg' viewBox='0 0 6 6'%3E%3Cpath d='M1 2l2 2 2-2' fill='none' stroke='%23777' stroke-width='.7'/%3E%3C/svg%3E") no-repeat right 1px center / 6px 6px; border-color: #d0d0d0; border-radius: 1px; }
.frow .grow { flex: 1; }
.frow .short { width: 52px; }
.frow .off { background-color: #f4f4f4; border-color: #e4e4e4; color: #888; opacity: 1; }
.spin { display: flex; align-items: center; width: 52px; background: #fff; border-bottom: 1px solid #999; height: 10px; }
.frow .spin input { width: 43px; border: 0; text-align: right; height: 8px; }
.spin svg { width: 8px; height: 9px; background: #f2f2f2; }
fieldset { flex: 1; margin: 2px 0 0; padding: 0 7px; border: 1px solid #e2e2e2; min-width: 0; text-align: center; display: flex; flex-direction: column; }
legend { text-align: left; padding: 0 2px; margin-left: -7px; }
output { font-size: 13px; line-height: 18px; margin-top: 8px; color: #222; }
.deal { display: flex; gap: 14px; margin-top: 8px; }
.deal button { flex: 1; height: 10px; line-height: 8px; border: 1px solid #d25866; background: #f27583; }
.deal .buy { background: #9fb6f2; border-color: #839bdc; }
.blank { height: 9px; background: #fafafa; margin: 5px 0 8px; flex: none; }
fieldset p { padding: 0 6px; }

.terminal { flex: 1; display: flex; border-top: 1px solid #bbb; margin-top: 1px; background: #fff; }
.strip { width: 8px; flex: none; display: flex; flex-direction: column; justify-content: space-between; align-items: center; background: linear-gradient(#c9dbef, #8daed2); border: 1px solid #bbb; }
.strip span { writing-mode: vertical-rl; transform: rotate(180deg); line-height: 6px; color: #223; }
.termbody { flex: 1; min-width: 0; display: flex; flex-direction: column; padding-right: 2px; background: #fff; }
.orders { width: 100%; table-layout: fixed; border-collapse: collapse; }
.orders tr { height: 10px; }
.orders thead tr { height: 11px; }
.orders th, .orders td { padding: 0 2px 0 0; text-align: right; font-weight: 400; line-height: 9px; white-space: nowrap; }
.orders th { border-right: 1px solid #e3e3e3; }
.orders th:first-child { text-align: left; padding-left: 3px; }
.orders td:first-child { text-align: left; }
.orders .ico { vertical-align: middle; margin: 0 2px 0 1px; }
.orders button { color: #777; }
.alt { background: #ececec; }
.orders .balance { background: #c8c8c8; }
.orders .balance td { font-weight: 700; }
.c126 { width: 126px; } .c175 { width: 174px; } .c87 { width: 87px; } .c67 { width: 67px; } .c96 { width: 96px; } .c97 { width: 97px; } .c138 { width: 138px; } .c10 { width: 11px; }
.termtabs { margin-top: auto; display: flex; align-items: center; height: 13px; background: #f0f0f0; border-top: 1px solid #777; color: #777; }
.termtabs button { height: 8px; line-height: 8px; padding: 0 5px 0 4px; border-right: 1px solid #999; }
.termtabs .on { height: 11px; margin-top: -2px; background: #fff; color: #222; border: 1px solid #555; border-top: 0; }
.termtabs sub { color: #d21f2c; font-size: 5px; line-height: 0; }
.status { display: flex; height: 13px; align-items: center; border-top: 1px solid #bbb; background: #f0f0f0; color: #333; }
.status span { height: 9px; border-left: 1px solid #ccc; padding-left: 2px; }
.status .help { flex: 1; border: 0; padding-left: 1px; }
.prof { width: 57px; } .s1 { width: 52px; } .s2 { width: 35px; } .s3 { width: 32px; }
.net { width: 66px; display: flex; align-items: center; gap: 3px; }
.net svg { width: 12px; height: 8px; }

.taskbar { display: grid; grid-template-columns: 1fr auto 1fr; align-items: center; height: 24px; border-top: 1px solid #c8c8c8; font-family: "Open Sans", sans-serif; background: linear-gradient(90deg, #e2e2e2 0, #d8d8d8 9%, #d9dfe1 12%, #c9e6ee 15%, #dce8ec 18%, #d6d6d6 21%, #e6e6e6 28%, #dedede 32%, #ededed 38%, #ececec 65%, #dcdcdc 71%, #e8e8e8 76%, #dfe6e8 80%, #c8e6ef 85%, #dcdcdc 90%, #e2e2e2 100%); }
.weather { display: flex; align-items: center; gap: 3px; padding-left: 9px; text-align: left; justify-self: start; }
.weather svg { width: 13px; height: 13px; }
.weather small { display: block; font-size: 6px; color: #666; }
.apps { display: flex; align-items: center; gap: 4px; }
.apps > button { position: relative; width: 18px; height: 22px; display: flex; align-items: center; justify-content: center; }
.apps > button svg { width: 13px; height: 13px; }
.search { display: flex; align-items: center; gap: 4px; width: 107px; height: 16px; padding: 0 2px 0 4px; border-radius: 8px; background: #f9f9f9; font-size: 7px; color: #666; }
.search svg { width: 8px; height: 8px; flex: none; }
.search input { flex: 1; }
.search .castle { width: 21px; height: 14px; }
.run::after { content: ""; position: absolute; bottom: 0; left: 8px; width: 3px; height: 1px; background: #777; }
.active { background: #f8f8f8; border-radius: 2px; }
.active::after { left: 6px; width: 7px; background: #1a6fc4; }
.alert { background: #efa5a5; border-radius: 2px; }
.alert::after { left: 2px; width: 14px; height: 2px; background: #bb1c24; }
.tray { display: flex; align-items: center; justify-self: end; gap: 6px; padding-right: 9px; text-align: right; color: #333; }
.tray svg { width: 9px; height: 9px; fill: none; stroke: #444; }
.lang { margin: 0 3px; text-align: center; }
</style>
